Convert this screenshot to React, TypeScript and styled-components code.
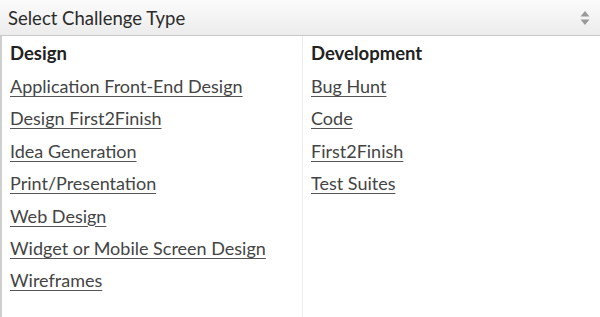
import React from 'react';
import styled, { createGlobalStyle } from 'styled-components';

const GROUPS = [
  {
    title: 'Design',
    items: [
      'Application Front-End Design',
      'Design First2Finish',
      'Idea Generation',
      'Print/Presentation',
      'Web Design',
      'Widget or Mobile Screen Design',
      'Wireframes',
    ],
  },
  {
    title: 'Development',
    items: ['Bug Hunt', 'Code', 'First2Finish', 'Test Suites'],
  },
];

const GlobalStyle = createGlobalStyle`
  html, body {
    margin: 0;
    padding: 0;
    background: #fff;
  }
  body {
    font-family: Lato, "Open Sans", "Liberation Sans", sans-serif;
    color: #333;
  }
`;

export default function App() {
  return (
    <>
      <GlobalStyle />
      <Select>
        <Trigger>
          <span>Select Challenge Type</span>
          <Arrows viewBox="0 0 10 16" width="10" height="16">
            <path d="M5 1 L9.5 6.5 H0.5 Z" fill="#999" />
            <path d="M5 15 L9.5 9.5 H0.5 Z" fill="#999" />
          </Arrows>
        </Trigger>
        <Dropdown>
          {GROUPS.map((group) => (
            <Column key={group.title}>
              <GroupTitle>{group.title}</GroupTitle>
              {group.items.map((item) => (
                <Option key={item} href="#">
                  {item}
                </Option>
              ))}
            </Column>
          ))}
        </Dropdown>
      </Select>
    </>
  );
}

const Select = styled.div`
  width: 600px;
  height: 317px;
  display: flex;
  flex-direction: column;
  overflow: hidden;
`;

const Trigger = styled.div`
  height: 36px;
  box-sizing: border-box;
  display: flex;
  align-items: center;
  justify-content: space-between;
  padding: 0 8px;
  background: linear-gradient(#fbfbfb, #ececec);
  border-bottom: 1px solid #c8c8c8;
  font-size: 18.5px;
  color: #2b2b2b;
`;

const Arrows = styled.svg`
  display: block;
  margin-right: 2px;
`;

const Dropdown = styled.div`
  flex: 1;
  display: grid;
  grid-template-columns: 300px 1fr;
  border-left: 2px solid #cfcfcf;
`;

const Column = styled.div`
  display: flex;
  flex-direction: column;
  align-items: flex-start;
  padding: 5px 8px 0 8px;

  & + & {
    border-left: 1px solid #ececec;
  }
`;

const GroupTitle = styled.div`
  font-weight: 700;
  font-size: 18.5px;
  line-height: 25px;
  color: #222;
  margin-bottom: 4px;
`;

const Option = styled.a`
  font-size: 18px;
  line-height: 32.4px;
  color: #444;
  text-decoration: underline;
  text-decoration-color: #555;
  text-underline-offset: 3px;
`;
